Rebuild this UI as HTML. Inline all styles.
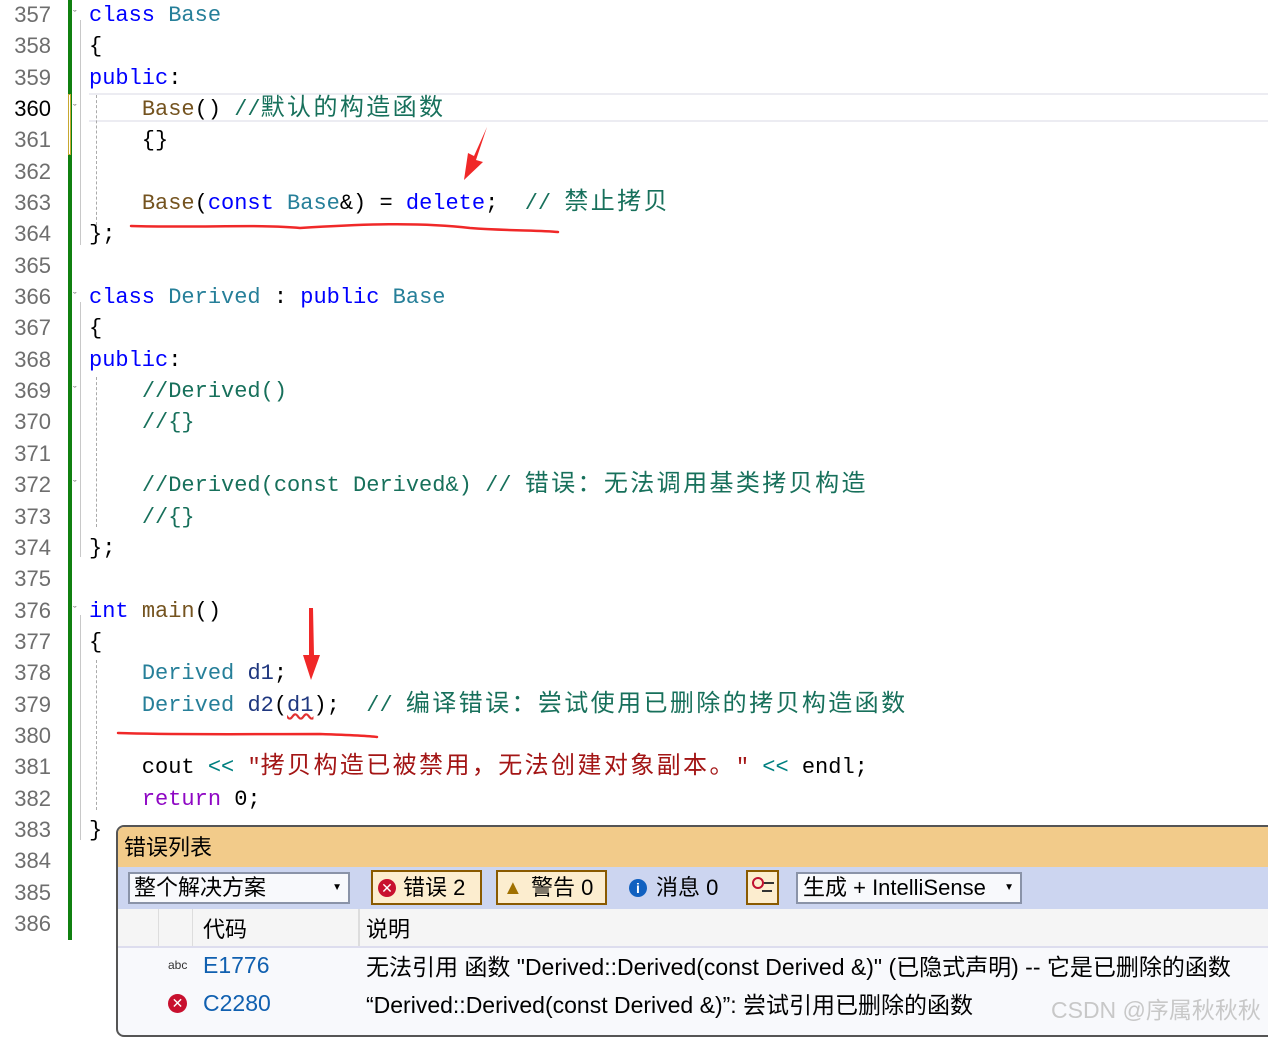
<!DOCTYPE html>
<html><head><meta charset="utf-8"><style>
body{margin:0;width:1268px;height:1038px;background:#fff;overflow:hidden;position:relative;font-family:"Liberation Mono","Noto Sans CJK SC",monospace}
.ln{position:absolute;left:0;width:51px;text-align:right;font:22px "Liberation Sans",sans-serif;color:#6e6e6e;line-height:31.35px}
.code{position:absolute;left:89px;top:0px;font-size:22px;color:#000}
.code div{height:31.35px;line-height:31.35px;white-space:pre;overflow:visible}
.c{letter-spacing:2.4px;font-size:24px;line-height:0;font-family:"Noto Sans CJK SC",sans-serif}
.k{color:#0000ff}.t{color:#267f99}.f{color:#74531f}.m{color:#17705b}.v{color:#1f377f}.s{color:#a31515}.o{color:#008080}.p{color:#8f08c4}
.ui{font-family:"Liberation Sans","Noto Sans CJK SC",sans-serif}
</style></head><body>
<div class="ln" style="top:-1px">357<br>358<br>359<br><span style="color:#000">360</span><br>361<br>362<br>363<br>364<br>365<br>366<br>367<br>368<br>369<br>370<br>371<br>372<br>373<br>374<br>375<br>376<br>377<br>378<br>379<br>380<br>381<br>382<br>383<br>384<br>385<br>386</div>
<div style="position:absolute;left:68px;top:0;width:4px;height:940px;background:#108010"></div>
<div style="position:absolute;left:68px;top:94px;width:3px;height:61px;background:#fff;border:1px solid #c8a830;box-sizing:border-box"></div>
<div style="position:absolute;left:89px;top:93px;width:1179px;height:29px;border-top:2px solid #ececf2;border-bottom:2px solid #ececf2;box-sizing:border-box"></div>
<div style="position:absolute;left:80px;top:20px;width:1px;height:225px;background:#c8c8c8"></div>
<div style="position:absolute;left:96px;top:95px;height:130px;border-left:1px dashed #aaa"></div>
<div style="position:absolute;left:80px;top:302px;width:1px;height:255px;background:#c8c8c8"></div>
<div style="position:absolute;left:96px;top:377px;height:150px;border-left:1px dashed #aaa"></div>
<div style="position:absolute;left:80px;top:615px;width:1px;height:225px;background:#c8c8c8"></div>
<div style="position:absolute;left:96px;top:660px;height:150px;border-left:1px dashed #aaa"></div>
<div style="position:absolute;left:73px;top:0;font-size:11px;color:#777;line-height:31.35px" class="ui">ˇ<br><br><br>ˇ<br><br><br><br><br><br>ˇ<br><br><br>ˇ<br><br><br>ˇ<br><br><br><br>ˇ</div>
<div class="code">
<div><span class="k">class</span> <span class="t">Base</span></div>
<div>{</div>
<div><span class="k">public</span>:</div>
<div>    <span class="f">Base</span>() <span class="m">//<span class="c">默认的构造函数</span></span></div>
<div>    {}</div>
<div></div>
<div>    <span class="f">Base</span>(<span class="k">const</span> <span class="t">Base</span>&amp;) = <span class="k">delete</span>;  <span class="m">// <span class="c">禁止拷贝</span></span></div>
<div>};</div>
<div></div>
<div><span class="k">class</span> <span class="t">Derived</span> : <span class="k">public</span> <span class="t">Base</span></div>
<div>{</div>
<div><span class="k">public</span>:</div>
<div>    <span class="m">//Derived()</span></div>
<div>    <span class="m">//{}</span></div>
<div></div>
<div>    <span class="m">//Derived(const Derived&amp;) // <span class="c">错误：无法调用基类拷贝构造</span></span></div>
<div>    <span class="m">//{}</span></div>
<div>};</div>
<div></div>
<div><span class="k">int</span> <span class="f">main</span>()</div>
<div>{</div>
<div>    <span class="t">Derived</span> <span class="v">d1</span>;</div>
<div>    <span class="t">Derived</span> <span class="v">d2</span>(<span class="v" style="text-decoration:underline wavy #e03030">d1</span>);  <span class="m">// <span class="c">编译错误：尝试使用已删除的拷贝构造函数</span></span></div>
<div></div>
<div>    cout <span class="o">&lt;&lt;</span> <span class="s">"<span class="c">拷贝构造已被禁用，无法创建对象副本。</span>"</span> <span class="o">&lt;&lt;</span> endl;</div>
<div>    <span class="p">return</span> 0;</div>
<div>}</div>
</div>
<svg style="position:absolute;left:0;top:0" width="1268" height="1038">
<g fill="none" stroke="#f02828" stroke-width="2.5" stroke-linecap="round">
<path d="M131 226 C200 228 260 224 300 228 C360 224 420 222 470 228 C510 231 540 230 558 232"/>
<path d="M118 733 C180 735 250 734 320 734 C350 735 370 736 377 737"/>
<path d="M346 1017 C400 1021 480 1025 560 1021 C620 1018 700 1014 760 1012"/>
<path d="M745 988 C790 985 900 990 980 993 C1000 1000 998 1020 990 1023 C920 1026 850 1020 800 1016 C760 1015 745 1008 742 1003 Z"/>
</g>
<g fill="#f02828">
<path d="M487 127 L476 160 L483 162 L464 180 L468 153 L474 156 Z"/>
<path d="M309 608 L313 608 L314 655 L320 655 L311 680 L303 655 L309 655 Z"/>
</g>
</svg>
<div class="ui" style="position:absolute;left:116px;top:825px;width:1160px;height:212px;border:2px solid #555;border-radius:8px;box-sizing:border-box;background:#f8f9fc;overflow:hidden">
 <div style="height:40px;background:#f2cb8a;font-size:22px;line-height:42px;padding-left:6px">错误列表</div>
 <div style="height:42px;background:#ccd5f0;position:relative;font-size:22px">
  <div style="position:absolute;left:10px;top:5px;width:222px;height:32px;border:2px solid #8a93a8;background:#f8f9fc;box-sizing:border-box;line-height:28px;padding-left:4px">整个解决方案<span style="position:absolute;right:6px;font-size:10px">▼</span></div>
  <div style="position:absolute;left:253px;top:3px;width:111px;height:35px;border:2px solid #8a5a00;background:#fcedcf;box-sizing:border-box;line-height:31px;padding-left:30px">错误 2<span style="position:absolute;left:5px;top:7px;width:18px;height:18px;border-radius:50%;background:#c8102e;color:#fff;font-size:14px;line-height:18px;text-align:center">✕</span></div>
  <div style="position:absolute;left:378px;top:3px;width:111px;height:35px;border:2px solid #8a5a00;background:#fcedcf;box-sizing:border-box;line-height:31px;padding-left:33px">警告 0<span style="position:absolute;left:5px;top:4px;color:#a07000;font-size:20px;line-height:24px">▲</span></div>
  <div style="position:absolute;left:508px;top:3px;height:35px;line-height:35px;padding-left:30px">消息 0<span style="position:absolute;left:3px;top:9px;width:18px;height:18px;border-radius:50%;background:#1060c0;color:#fff;font-size:14px;line-height:18px;text-align:center;font-weight:bold">i</span></div>
  <div style="position:absolute;left:628px;top:3px;width:33px;height:35px;border:2px solid #8a5a00;background:#fcedcf;box-sizing:border-box"><span style="position:absolute;left:4px;top:5px;width:8px;height:8px;border:2.5px solid #c01030;border-radius:50%"></span><span style="position:absolute;left:16px;top:10px;width:10px;height:2px;background:#333"></span><span style="position:absolute;left:14px;top:18px;width:10px;height:2px;background:#333"></span></div>
  <div style="position:absolute;left:678px;top:5px;width:226px;height:32px;border:2px solid #8a93a8;background:#f8f9fc;box-sizing:border-box;line-height:28px;padding-left:5px">生成 + IntelliSense<span style="position:absolute;right:6px;font-size:10px">▼</span></div>
 </div>
 <div style="height:37px;background:#f5f5f5;border-bottom:2px solid #dde;position:relative;font-size:22px;line-height:42px">
  <div style="position:absolute;left:40px;top:0;height:37px;border-left:1px solid #ddd"></div>
  <div style="position:absolute;left:74px;top:0;height:37px;border-left:1px solid #ddd"></div>
  <div style="position:absolute;left:240px;top:0;height:37px;border-left:2px solid #ddd"></div>
  <span style="position:absolute;left:85px">代码</span><span style="position:absolute;left:248px">说明</span>
 </div>
 <div style="position:relative;font-size:23px;height:80px">
  <span style="position:absolute;left:50px;top:10px;font-size:12px;color:#333">abc</span>
  <span style="position:absolute;left:85px;top:4px;color:#1060b0">E1776</span>
  <span style="position:absolute;left:248px;top:0px">无法引用 函数 "Derived::Derived(const Derived &amp;)" (已隐式声明) -- 它是已删除的函数</span>
  <span style="position:absolute;left:50px;top:46px;width:19px;height:19px;border-radius:50%;background:#c8102e;color:#fff;font-size:14px;line-height:19px;text-align:center">✕</span>
  <span style="position:absolute;left:85px;top:42px;color:#1060b0">C2280</span>
  <span style="position:absolute;left:248px;top:38px">“Derived::Derived(const Derived &amp;)”: 尝试引用已删除的函数</span>
  <span style="position:absolute;left:933px;top:43px;color:#c8c8c8">CSDN @序属秋秋秋</span>
 </div>
</div>
</body></html>
